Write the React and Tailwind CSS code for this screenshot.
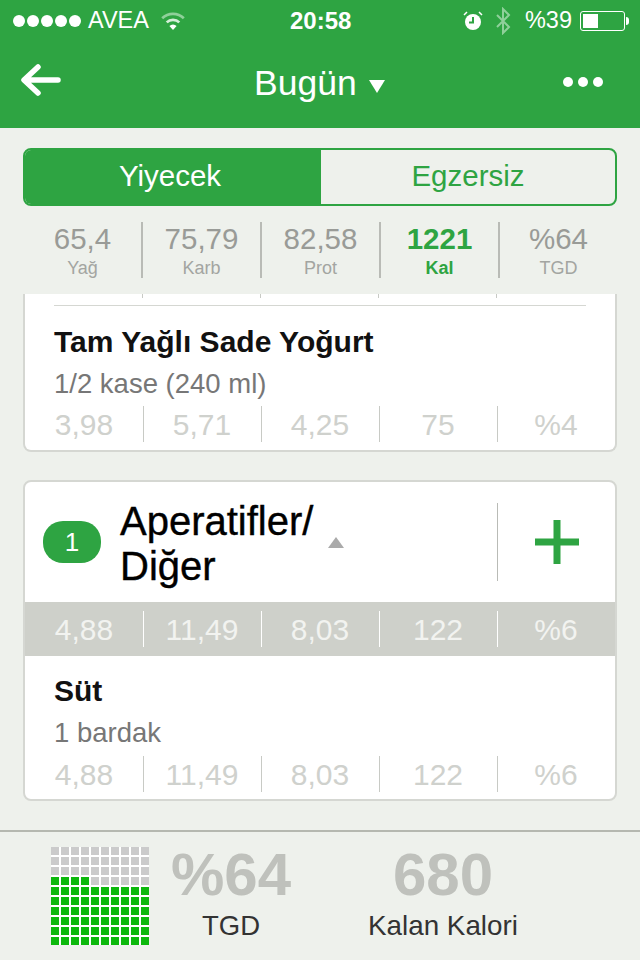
import React from 'react';

const font = "font-['Liberation_Sans',Arial,sans-serif]";

// Row of five numbers split by thin dividers
const NumberRow = ({ values, className = '', textClass = 'text-[#cfd1cd]', lineClass = 'bg-[#c8cac5]' }) => (
  <div className={`grid grid-cols-5 items-center ${className}`}>
    {values.map((value, i) => (
      <div key={i} className="relative flex h-[36px] items-center justify-center">
        <span className={`pt-[2px] text-[30px] leading-none ${textClass}`}>{value}</span>
        {i < 4 && <span className={`absolute right-[-1px] top-0 h-full w-px ${lineClass}`}></span>}
      </div>
    ))}
  </div>
);

const Summary = ({ value, label, active, last }) => (
  <div className="relative flex h-[56px] flex-col items-center">
    <span className={`text-[29.5px] leading-[34px] ${active ? 'font-bold text-[#2ea442]' : 'text-[#999b97]'}`}>{value}</span>
    <span className={`mt-[2px] text-[18px] leading-[20px] ${active ? 'font-bold text-[#2ea442]' : 'text-[#a3a5a1]'}`}>{label}</span>
    {!last && <span className="absolute right-[-1px] top-0 h-full w-[2px] bg-[#b9bbb6]"></span>}
  </div>
);

const Food = ({ name, amount }) => (
  <div className="px-[29px]">
    <div className="text-[30px] font-bold leading-[34px] text-[#111]">{name}</div>
    <div className="mt-[10px] text-[27.5px] leading-[30px] text-[#777]">{amount}</div>
  </div>
);

// 10x10 grid, fills from the bottom row up and left to right
const WaffleChart = ({ percent }) => (
  <div className="grid grid-cols-10 gap-[2px] self-start bg-white">
    {Array.from({ length: 100 }).map((_, i) => {
      const row = 9 - Math.floor(i / 10);
      const filled = row * 10 + (i % 10) < percent;
      return <div key={i} className={`h-[8px] w-[8px] ${filled ? 'bg-[#0cb80c]' : 'bg-[#cbcbcb]'}`}></div>;
    })}
  </div>
);

const StatusBar = () => (
  <div className="relative flex h-[42px] items-center justify-between pl-[13px] pr-[11px] text-[23.5px] text-white">
    <div className="flex items-center">
      <div className="flex gap-[2px]">
        {[0, 1, 2, 3, 4].map((d) => (
          <span key={d} className="h-[12px] w-[12px] rounded-full bg-white"></span>
        ))}
      </div>
      <span className="ml-[7px]">AVEA</span>
      <svg className="ml-[12px]" width="24" height="18" viewBox="0 0 26 20">
        <path d="M1 7a17 17 0 0 1 24 0" fill="none" stroke="#8fd09a" strokeWidth="3" />
        <path d="M6 11.5a10 10 0 0 1 14 0" fill="none" stroke="#d5efd9" strokeWidth="3" />
        <path d="M9 15.5a5.5 5.5 0 0 1 8 0L13 20z" fill="#fff" />
      </svg>
    </div>
    <span className="absolute left-[290px] top-[7px] text-[24px] font-bold leading-[28px]">20:58</span>
    <div className="flex items-center">
      <svg width="20" height="20" viewBox="0 0 20 20">
        <circle cx="10" cy="11" r="8" fill="#fff" />
        <path d="M10 6v5.5H6" fill="none" stroke="#2ea442" strokeWidth="2" />
        <path d="M1 4l3-3M19 4l-3-3" stroke="#fff" strokeWidth="1.5" />
      </svg>
      <svg className="ml-[12px]" width="16" height="28" viewBox="0 0 16 28">
        <path d="M2 8l12 12-6 6V2l6 6L2 20" fill="none" stroke="#8fd09a" strokeWidth="2" />
      </svg>
      <span className="ml-[14px]">%39</span>
      <div className="ml-[8px] flex h-[20px] w-[45px] items-center rounded-[3px] border border-white p-[2px]">
        <div className="h-full w-[15px] bg-white"></div>
      </div>
      <span className="ml-[1px] h-[8px] w-[3px] rounded-r-sm bg-white"></span>
    </div>
  </div>
);

export default function App() {
  return (
    <div className={`flex h-[960px] w-[640px] flex-col overflow-hidden bg-[#eef1ec] ${font}`}>
      <header className="h-[128px] bg-[#2ea442]">
        <StatusBar />
        <div className="relative flex h-[76px] items-center justify-between pl-[20px] pr-[37px]">
          <svg width="41" height="32" viewBox="0 0 41 32">
            <path d="M18 3L4 16l14 13M5 16h33" fill="none" stroke="#fff" strokeWidth="5.5" strokeLinecap="round" strokeLinejoin="round" />
          </svg>
          <div className="absolute left-[254px] top-[21px] flex items-center text-[35.5px] leading-[40px] text-white">
            Bugün
            <span className="ml-[12px] mt-[6px] h-0 w-0 border-x-[8px] border-t-[13px] border-x-transparent border-t-white"></span>
          </div>
          <div className="mt-[4px] flex gap-[5px]">
            <span className="h-[10px] w-[10px] rounded-full bg-white"></span>
            <span className="h-[10px] w-[10px] rounded-full bg-white"></span>
            <span className="h-[10px] w-[10px] rounded-full bg-white"></span>
          </div>
        </div>
      </header>

      <div className="flex min-h-0 flex-1 flex-col px-[23px] pt-[20px]">
        <div className="flex h-[58px] overflow-hidden rounded-[8px] border-2 border-[#2ea442] text-[29.5px]">
          <div className="flex w-[296px] items-center justify-center bg-[#2ea442] pb-[2px] pr-[6px] text-white">Yiyecek</div>
          <div className="flex flex-1 items-center justify-center pb-[2px] text-[#2ea442]">Egzersiz</div>
        </div>

        <div className="mt-[16px] grid grid-cols-[repeat(5,119px)]">
          <Summary value="65,4" label="Yağ" />
          <Summary value="75,79" label="Karb" />
          <Summary value="82,58" label="Prot" />
          <Summary value="1221" label="Kal" active />
          <Summary value="%64" label="TGD" last />
        </div>

        <div className="mt-[16px] min-h-0 flex-1 overflow-hidden">
          <div className="rounded-b-[8px] border-x-2 border-b-2 border-[#d5d7d2] bg-white">
            <div className="grid h-[4px] grid-cols-5">
              {[0, 1, 2, 3].map((i) => (
                <span key={i} className="border-r border-[#c8cac5]"></span>
              ))}
            </div>
            <div className="mx-[29px] mt-[7px] h-px bg-[#d5d7d2]"></div>
            <div className="pt-[19px] pb-[8px]">
              <Food name="Tam Yağlı Sade Yoğurt" amount="1/2 kase (240 ml)" />
              <NumberRow className="mt-[7px]" values={['3,98', '5,71', '4,25', '75', '%4']} />
            </div>
          </div>

          <div className="mt-[28px] overflow-hidden rounded-[8px] border-2 border-[#d5d7d2] bg-white">
            <div className="flex h-[120px] items-center">
              <span className="ml-[18px] flex h-[42px] w-[58px] items-center justify-center rounded-[20px] bg-[#2ea442] text-[26px] text-white">1</span>
              <div className="ml-[19px] mt-[3px] w-[208px] text-[40px] leading-[45px] text-black [-webkit-text-stroke:0.4px_black]">
                Aperatifler/ Diğer
              </div>
              <span className="h-0 w-0 border-x-[8px] border-b-[11px] border-x-transparent border-b-[#aaaaaa]"></span>
              <div className="ml-auto flex h-[78px] w-[118px] items-center justify-center border-l border-[#b9bbb6]">
                <svg width="44" height="44" viewBox="0 0 44 44">
                  <path d="M22 0v44M0 22h44" stroke="#2ea442" strokeWidth="7" />
                </svg>
              </div>
            </div>
            <NumberRow
              className="h-[54px] bg-[#ced0ca]"
              textClass="text-[#f2f3f0]"
              lineClass="bg-white"
              values={['4,88', '11,49', '8,03', '122', '%6']}
            />
            <div className="pt-[18px] pb-[7px]">
              <Food name="Süt" amount="1 bardak" />
              <NumberRow className="mt-[8px]" values={['4,88', '11,49', '8,03', '122', '%6']} />
            </div>
          </div>
        </div>
      </div>

      <footer className="flex h-[130px] border-t-2 border-[#b5b8b0] pl-[51px] pt-[15px]">
        <WaffleChart percent={64} />
        <div className="ml-[22px] flex w-[120px] flex-col items-center">
          <span className="text-[60px] font-bold leading-[56px] text-[#bfc1bc]">%64</span>
          <span className="mt-[6px] text-[27.5px] leading-[34px] text-[#333]">TGD</span>
        </div>
        <div className="ml-[77px] flex w-[150px] flex-col items-center">
          <span className="text-[60px] font-bold leading-[56px] text-[#bfc1bc]">680</span>
          <span className="mt-[6px] whitespace-nowrap text-[27.8px] leading-[34px] text-[#333]">Kalan Kalori</span>
        </div>
      </footer>
    </div>
  );
}
